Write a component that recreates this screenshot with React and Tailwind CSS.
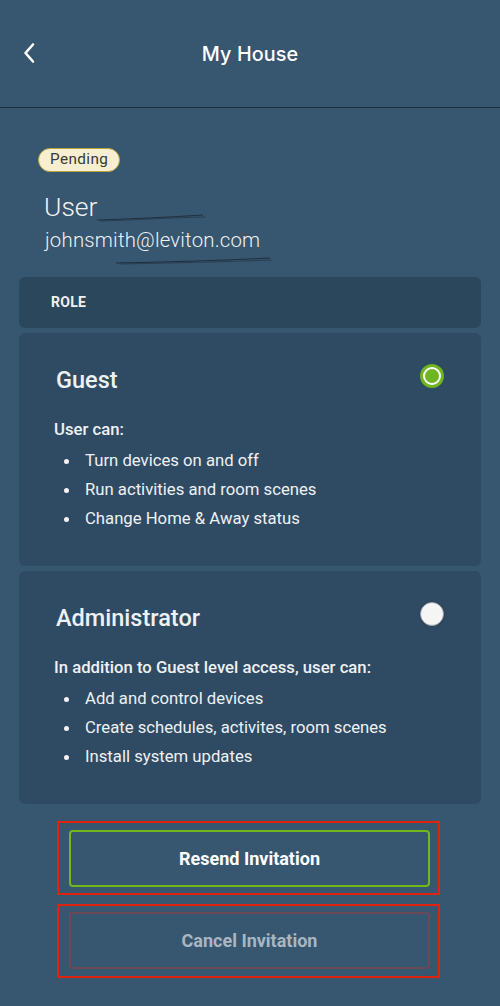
import React from "react";

function Bullet({ children }) {
  return (
    <li className="flex items-center h-[29px]">
      <span className="w-[5px] h-[5px] rounded-full bg-[#f2f4f6] ml-[10px] mr-[16px]" />
      <span>{children}</span>
    </li>
  );
}

function RoleCard({ title, intro, items, selected }) {
  return (
    <div className="bg-[#2f4b63] rounded-[6px] mt-[5px] h-[233px] pl-[35px] pr-[37px] pt-[32px] text-[#eef1f4]">
      <div className="flex items-start justify-between">
        <div className="text-[23.5px] font-medium leading-[30px] ml-[2px]">{title}</div>
        {selected ? (
          <div className="w-[24px] h-[24px] rounded-full bg-[#6fb51f] flex items-center justify-center mt-[-1px]">
            <div className="w-[18px] h-[18px] rounded-full border-[2px] border-white bg-[#6fb51f]" />
          </div>
        ) : (
          <div className="w-[24px] h-[24px] rounded-full bg-[#f5f5f5] border border-[#9aa3ab] shadow-[0_0_2px_rgba(0,0,0,0.4)] mt-[-1px]" />
        )}
      </div>
      <div className="mt-[25px] text-[16.7px] font-medium leading-[20px]">{intro}</div>
      <ul className="mt-[7px] text-[16.7px] leading-[20px]">
        {items.map((t) => (
          <Bullet key={t}>{t}</Bullet>
        ))}
      </ul>
    </div>
  );
}

export default function App() {
  return (
    <div
      className="w-[500px] h-[1006px] bg-[#37566f] text-white relative overflow-hidden"
      style={{ fontFamily: "Roboto, 'Open Sans', sans-serif" }}
    >
      {/* Header */}
      <div className="h-[108px] border-b border-[#1d2d3a] relative flex items-start justify-center pt-[40px]">
        <button className="absolute left-[18px] top-[41px] w-[22px] h-[24px] flex items-center justify-center">
          <svg width="14" height="22" viewBox="0 0 14 22" fill="none">
            <path d="M11 2.5 L3.5 11 L11 19.5" stroke="white" strokeWidth="2.6" strokeLinecap="round" strokeLinejoin="round" />
          </svg>
        </button>
        <div className="text-[19.8px] font-medium leading-[28px] tracking-[0.1px]" style={{ fontFamily: "Inter, Roboto, sans-serif" }}>
          My House
        </div>
      </div>

      {/* User info */}
      <div className="pl-[38px] pt-[39px] relative">
        <div className="inline-flex items-center h-[24px] px-[11px] rounded-full bg-[#f7efcf] border-[1.5px] border-[#b8a43a] text-[#3a3a36] text-[15.3px] leading-none tracking-[0.4px]">
          Pending
        </div>
        <div className="ml-[6px] mt-[20px] text-[26.5px] font-light leading-[30px] text-[#f1f3f5]">User</div>
        <div className="ml-[7px] mt-[5px] text-[20.4px] font-light leading-[26px] text-[#eef1f4] tracking-[0.2px]">
          johnsmith@leviton.com
        </div>
        {/* scribble marks */}
        <svg className="absolute left-[95px] top-[103px]" width="115" height="12" viewBox="0 0 115 12" fill="none">
          <path d="M2 9 C30 8 60 7 108 4" stroke="#1e2f3e" strokeWidth="1" />
          <path d="M5 10 C40 9 70 7 110 6" stroke="#24394a" strokeWidth="0.8" />
        </svg>
        <svg className="absolute left-[112px] top-[146px]" width="165" height="12" viewBox="0 0 165 12" fill="none">
          <path d="M4 9 C50 8 100 7 158 4" stroke="#1e2f3e" strokeWidth="1" />
          <path d="M8 10 C60 9 110 8 160 6" stroke="#24394a" strokeWidth="0.8" />
        </svg>
      </div>

      {/* Role section */}
      <div className="mx-[19px] mt-[24px]">
        <div className="bg-[#2b475b] rounded-[6px] h-[51px] flex items-center pl-[32px]">
          <span className="text-[14px] font-bold tracking-[0.3px] text-[#eef1f4]">ROLE</span>
        </div>
        <RoleCard
          title="Guest"
          intro="User can:"
          selected
          items={["Turn devices on and off", "Run activities and room scenes", "Change Home & Away status"]}
        />
        <RoleCard
          title="Administrator"
          intro="In addition to Guest level access, user can:"
          items={["Add and control devices", "Create schedules, activites, room scenes", "Install system updates"]}
        />
      </div>

      {/* Buttons */}
      <div className="ml-[57px] w-[383px] mt-[17px] flex flex-col gap-[9px]">
        <div className="border-[2px] border-[#e0230d] h-[74px] pl-[10px] pr-[8px] pt-[7px]">
          <button className="w-full h-[57px] rounded-[4px] border-[2px] border-[#72b81a] text-[18px] font-bold text-white">
            Resend Invitation
          </button>
        </div>
        <div className="border-[2px] border-[#e0230d] h-[74px] pl-[10px] pr-[8px] pt-[6px]">
          <button className="w-full h-[57px] rounded-[4px] border-[2px] border-[#6b4a55] text-[18px] font-bold text-[#a9b6c2]">
            Cancel Invitation
          </button>
        </div>
      </div>
    </div>
  );
}
